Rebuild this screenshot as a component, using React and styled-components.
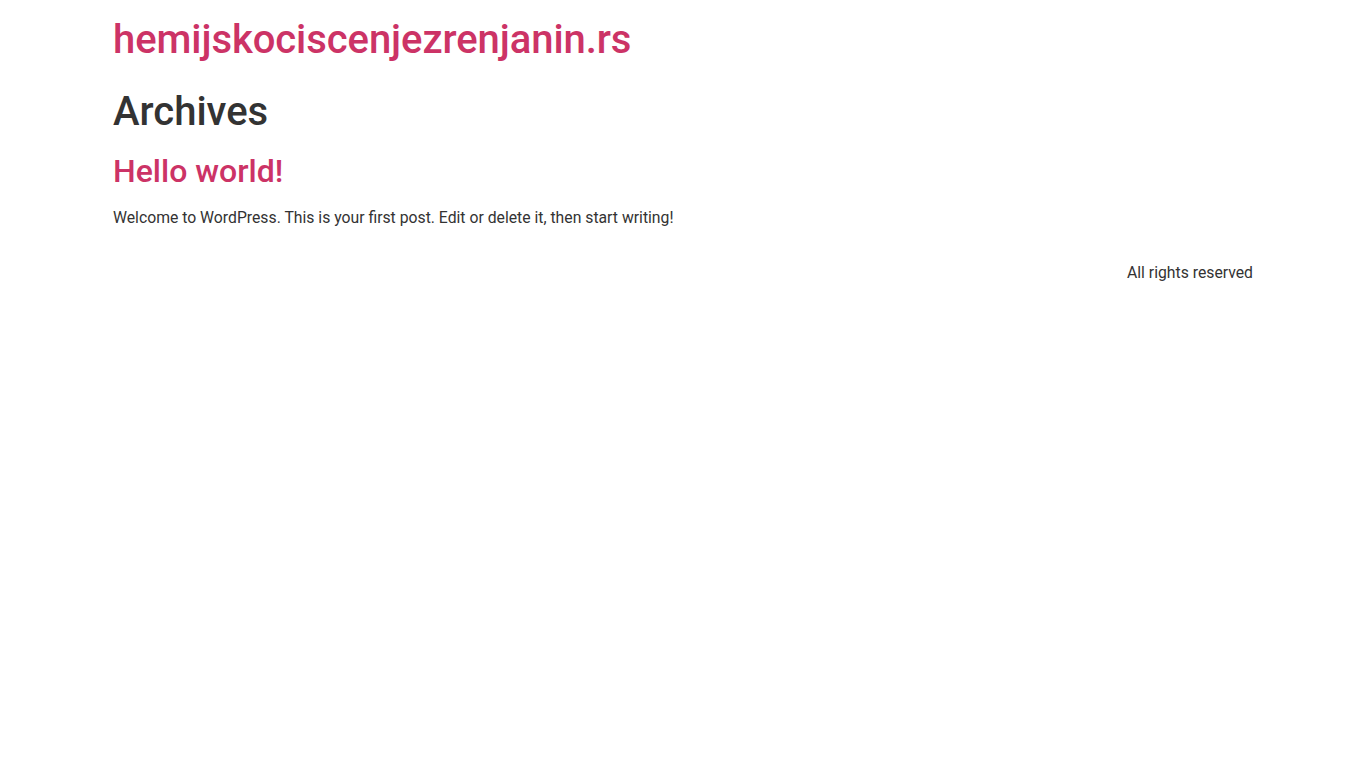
import React from "react";
import styled, { createGlobalStyle } from "styled-components";

const GlobalStyle = createGlobalStyle`
  html, body {
    margin: 0;
    padding: 0;
    background: #fff;
  }
  body {
    font-family: Roboto, "Liberation Sans", Arial, sans-serif;
    font-size: 16px;
    line-height: 1.5;
    color: #333;
    -webkit-font-smoothing: antialiased;
  }
`;

function App() {
  return (
    <>
      <GlobalStyle />
      <Header>
        <SiteTitle href="#">hemijskociscenjezrenjanin.rs</SiteTitle>
      </Header>
      <Main>
        <PageTitle>Archives</PageTitle>
        <Post>
          <PostTitle>
            <PostLink href="#">Hello world!</PostLink>
          </PostTitle>
          <Excerpt>
            Welcome to WordPress. This is your first post. Edit or delete it,
            then start writing!
          </Excerpt>
        </Post>
      </Main>
      <Footer>
        <Copyright>All rights reserved</Copyright>
      </Footer>
    </>
  );
}

export default App;

const Wrap = styled.div`
  max-width: 1140px;
  margin: 0 auto;
`;

const Header = styled(Wrap)`
  padding: 16px 0;
`;

const SiteTitle = styled.a`
  display: block;
  font-size: 40px;
  font-weight: 500;
  line-height: 48px;
  letter-spacing: -0.07px;
  color: #cc3366;
  text-decoration: none;
  margin-bottom: 8px;
`;

const Main = styled(Wrap)``;

const PageTitle = styled.h1`
  margin: 0 0 16px;
  font-size: 40px;
  font-weight: 500;
  line-height: 48px;
  color: #333;
`;

const Post = styled.article`
  margin: 0;
`;

const PostTitle = styled.h2`
  margin: 0 0 16px;
  font-size: 32px;
  font-weight: 500;
  line-height: 38px;
`;

const PostLink = styled.a`
  color: #cc3366;
  text-decoration: none;
`;

const Excerpt = styled.p`
  margin: 0;
  font-size: 15.75px;
  line-height: 24px;
`;

const Footer = styled(Wrap)`
  padding: 31px 0 16px;
  display: flex;
  justify-content: flex-end;
`;

const Copyright = styled.p`
  margin: 0;
  font-size: 15.75px;
  line-height: 24px;
`;
